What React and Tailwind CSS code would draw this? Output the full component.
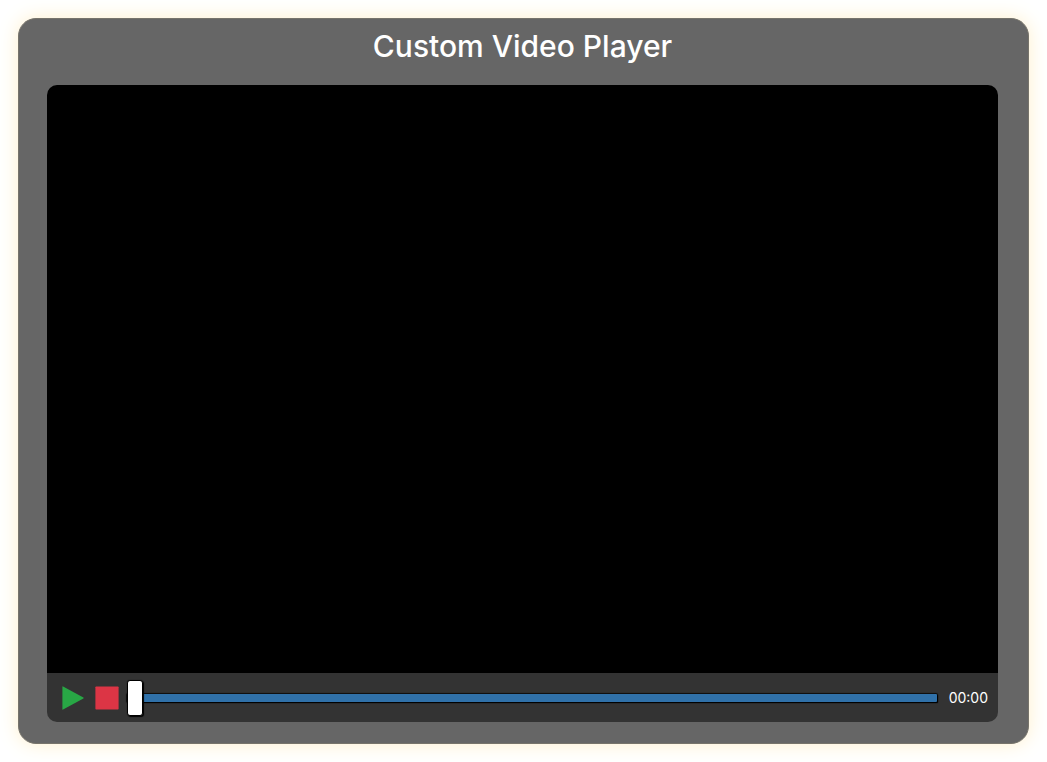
import { useState } from 'react';

function PlayIcon() {
  return (
    <svg viewBox="0 0 22 24" className="h-6 w-[22px]" aria-hidden="true">
      <path d="M.4.8 Q.4 0 1.1.4L21.4 11.6Q22 12 21.4 12.4L1.1 23.6Q.4 24 .4 23.2Z" fill="#28a745" />
    </svg>
  );
}

function StopIcon() {
  return (
    <svg viewBox="0 0 24 24" className="size-6" aria-hidden="true">
      <rect x="0.4" y="0.4" width="23.2" height="23.2" rx="0.8" fill="#dc3545" />
    </svg>
  );
}

const slider =
  'h-9 min-w-0 flex-1 cursor-pointer appearance-none bg-transparent ' +
  '[&::-webkit-slider-runnable-track]:h-2 [&::-webkit-slider-runnable-track]:rounded-[1px] [&::-webkit-slider-runnable-track]:bg-[#3071a9] [&::-webkit-slider-runnable-track]:shadow-[1px_1px_1px_#000,0_0_1px_1px_#0d0d0d] ' +
  '[&::-webkit-slider-thumb]:-mt-[14px] [&::-webkit-slider-thumb]:h-9 [&::-webkit-slider-thumb]:w-4 [&::-webkit-slider-thumb]:appearance-none [&::-webkit-slider-thumb]:rounded-[3px] [&::-webkit-slider-thumb]:border [&::-webkit-slider-thumb]:border-black [&::-webkit-slider-thumb]:bg-white [&::-webkit-slider-thumb]:shadow-[1px_1px_1px_#000,0_0_1px_#0d0d0d]';

export default function App() {
  const [progress, setProgress] = useState(0);
  return (
    <div className="bg-white p-[18px] font-['Inter',sans-serif] text-white">
      <main className="rounded-[18px] border border-[#77746b] bg-[#666] pt-[7px] pr-[30px] pb-[21px] pl-7 shadow-[0_0_20px_#fff0cc]">
        <h1 className="mb-[19px] text-center text-[30px] leading-10 font-medium">Custom Video Player</h1>
        <video className="block aspect-[951/588] w-full rounded-t-[10px] bg-black" />
        <div className="flex h-[49px] items-center rounded-b-[10px] bg-[#333] pr-[10px] pl-[15px]">
          <button type="button" aria-label="Play" className="mr-[11px] cursor-pointer">
            <PlayIcon />
          </button>
          <button type="button" aria-label="Stop" className="mr-2 cursor-pointer">
            <StopIcon />
          </button>
          <input
            type="range"
            aria-label="Progress"
            min="0"
            max="100"
            step="0.1"
            value={progress}
            onChange={(e) => setProgress(Number(e.target.value))}
            className={slider}
          />
          <span className="ml-3 text-sm leading-5">00:00</span>
        </div>
      </main>
    </div>
  );
}
